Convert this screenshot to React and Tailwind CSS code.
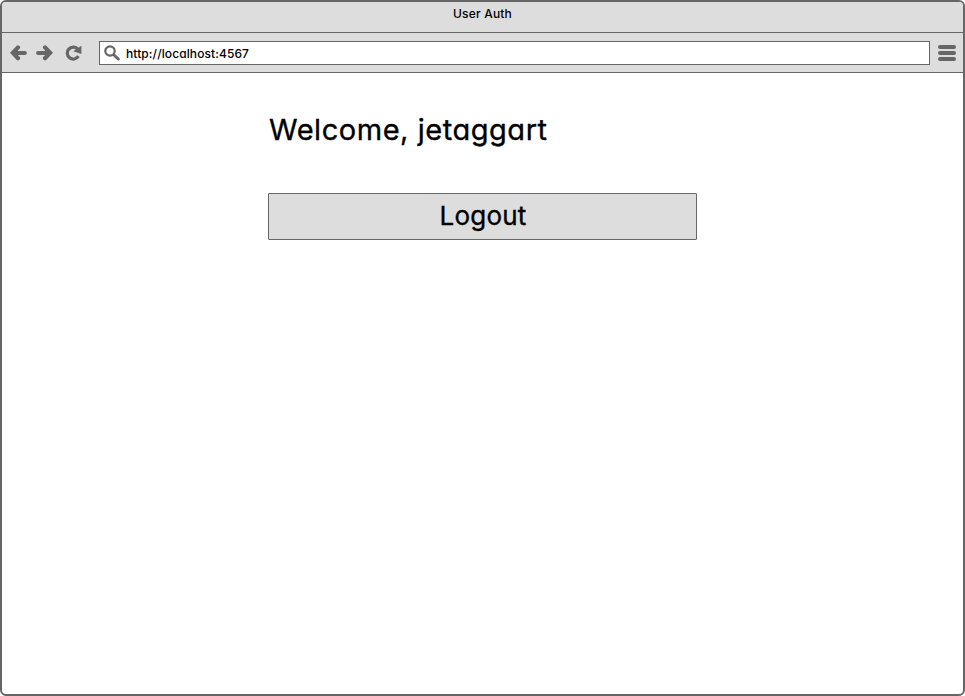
import React from "react";

function ArrowLeft() {
  return (
    <svg className="h-4 w-[17px] shrink-0" viewBox="0 0 17 16">
      <path d="M3 8H14.8M8 2.4L2.9 7.7L8 13.2" fill="#666" stroke="#666" strokeWidth="4.2" strokeLinecap="round" />
    </svg>
  );
}

function ArrowRight() {
  return (
    <svg className="ml-[9px] h-4 w-[17px] shrink-0" viewBox="0 0 17 16">
      <path d="M14 8H2.2M9 2.4L14.1 7.7L9 13.2" fill="#666" stroke="#666" strokeWidth="4.2" strokeLinecap="round" />
    </svg>
  );
}

function Reload() {
  return (
    <svg className="ml-3 h-4 w-[17px] shrink-0" viewBox="0 0 17 16">
      <path d="M12.6 3.9A6 6 0 1 0 13.4 11.2" fill="none" stroke="#666" strokeWidth="3.2" />
      <path d="M16.4 0.8V9L8.2 6.2Z" fill="#666" />
    </svg>
  );
}

function Search() {
  return (
    <svg className="h-4 w-4 shrink-0" viewBox="0 0 16 16">
      <circle cx="6" cy="6" r="4.7" fill="none" stroke="#666" strokeWidth="2.2" />
      <path d="M10 10L14.3 14" fill="none" stroke="#666" strokeWidth="3" strokeLinecap="round" />
    </svg>
  );
}

export default function App() {
  return (
    <div className="h-[696px] w-[965px] bg-white">
      <div className="flex h-full flex-col overflow-hidden rounded-[6px] border-2 border-[#666] bg-white font-['Inter',sans-serif] text-black [font-feature-settings:'cv11']">
        <header className="flex h-[31px] shrink-0 justify-center border-b border-[#666] bg-[#ddd] pt-[3px]">
          <h1 className="text-[12px] leading-[18px] font-medium tracking-[0.2px]">User Auth</h1>
        </header>
        <nav className="flex h-10 shrink-0 items-center border-b border-[#666] bg-[#ddd] pr-[7px] pl-2">
          <ArrowLeft />
          <ArrowRight />
          <Reload />
          <div className="ml-[17px] flex h-6 w-[831px] items-center border border-[#666] bg-white pl-1">
            <Search />
            <span className="ml-[6px] pt-[2px] text-[12px] leading-[18px] font-medium tracking-[0.1px]">http://localhost:4567</span>
          </div>
          <div className="ml-2 flex flex-col gap-[2px]">
            <div className="h-1 w-[18px] rounded-full bg-[#666]" />
            <div className="h-1 w-[18px] rounded-full bg-[#666]" />
            <div className="h-1 w-[18px] rounded-full bg-[#666]" />
          </div>
        </nav>
        <main className="ml-[266px] flex w-[429px] flex-col pt-9">
          <h2 className="h-[84px] pt-px pl-[1px] text-[29px] leading-[40px] font-normal tracking-[0.54px] whitespace-nowrap [-webkit-text-stroke:0.35px_#000]">Welcome, jetaggart</h2>
          <button className="h-[47px] rounded-[1px] border border-[#666] bg-[#ddd] pb-px pl-px text-[26px] leading-[40px] tracking-[0.2px] [-webkit-text-stroke:0.35px_#000]">Logout</button>
        </main>
      </div>
    </div>
  );
}
